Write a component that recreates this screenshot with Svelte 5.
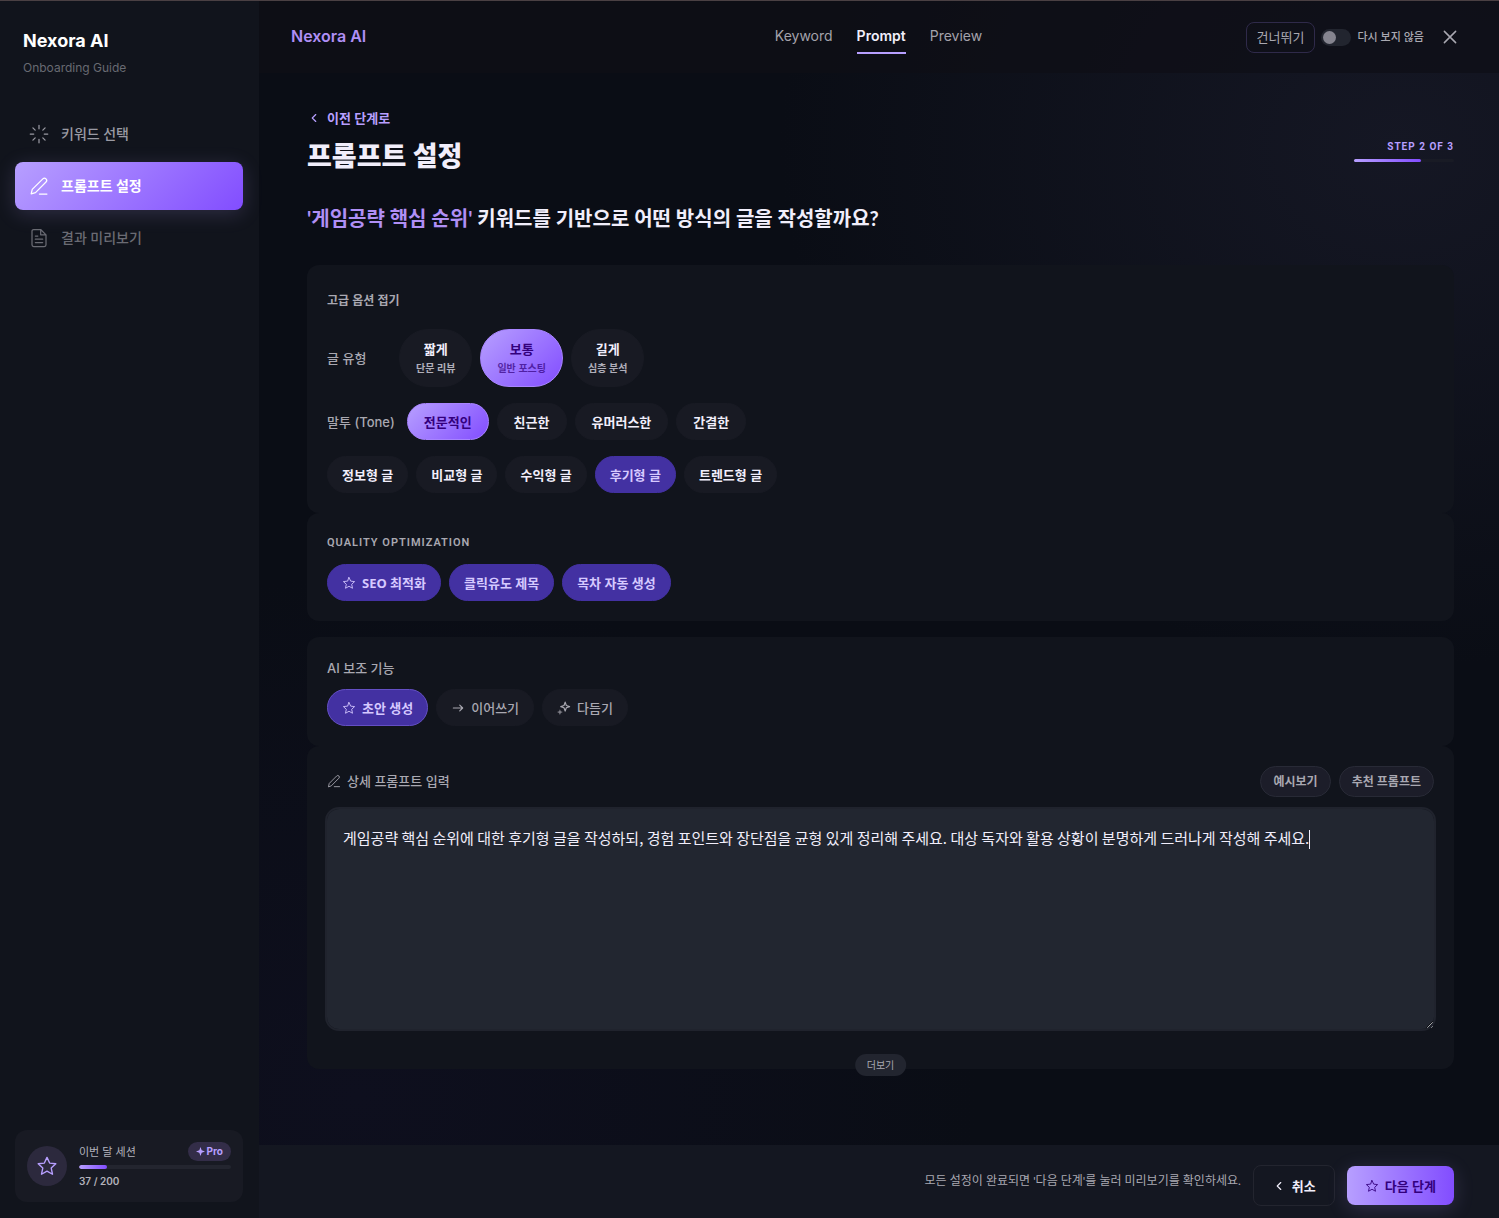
<script>
  let prompt = $state('게임공략 핵심 순위에 대한 후기형 글을 작성하되, 경험 포인트와 장단점을 균형 있게 정리해 주세요. 대상 독자와 활용 상황이 분명하게 드러나게 작성해 주세요.');
  let length = $state('보통');
  let tone = $state('전문적인');
  let kind = $state('후기형 글');
  let hideNext = $state(false);
  let field;

  const used = 37;
  const quota = 200;
  const step = 2;
  const steps = 3;

  const lengths = [
    { name: '짧게', note: '단문 리뷰' },
    { name: '보통', note: '일반 포스팅' },
    { name: '길게', note: '심층 분석' }
  ];
  const tones = ['전문적인', '친근한', '유머러스한', '간결한'];
  const kinds = ['정보형 글', '비교형 글', '수익형 글', '후기형 글', '트렌드형 글'];

  $effect(() => {
    field.focus();
    field.setSelectionRange(field.value.length, field.value.length);
  });
</script>

{#snippet star(size)}
  <svg class="icon" width={size} height={size} viewBox="0 0 24 24" aria-hidden="true">
    <path d="M12 2.6l2.9 6.2 6.7.8-5 4.6 1.4 6.8-6-3.4-6 3.4 1.4-6.8-5-4.6 6.7-.8z" />
  </svg>
{/snippet}

{#snippet pen(size)}
  <svg class="icon" width={size} height={size} viewBox="0 0 24 24" aria-hidden="true">
    <path d="M2.6 21.4l1.3-5.3L16.6 3.4a2.6 2.6 0 0 1 3.8 3.8L7.8 19.9zM12.5 21.7h9" />
  </svg>
{/snippet}

{#snippet chevron(size)}
  <svg class="icon bold" width={size} height={size} viewBox="0 0 24 24" aria-hidden="true">
    <path d="M15 6l-6 6 6 6" />
  </svg>
{/snippet}

<div class="app">
  <aside class="sidebar">
    <div class="brand">
      <strong>Nexora AI</strong>
      <span>Onboarding Guide</span>
    </div>
    <nav class="steps" aria-label="단계">
      <a class="step" href="#keyword">
        <svg class="icon" width="20" height="20" viewBox="0 0 24 24" aria-hidden="true">
          <path d="M12 1.5v4.2M12 18.3v4.2M1.5 12h4.2M18.3 12h4.2M4.7 4.7l2.7 2.7M16.6 16.6l2.7 2.7M4.7 19.3l2.7-2.7M16.6 7.4l2.7-2.7" />
        </svg>
        키워드 선택
      </a>
      <a class="step current" href="#prompt" aria-current="step">
        {@render pen(20)}
        프롬프트 설정
      </a>
      <a class="step upcoming" href="#preview">
        <svg class="icon" width="20" height="20" viewBox="0 0 24 24" aria-hidden="true">
          <path d="M14 1.8H5.6a2 2 0 0 0-2 2v16.4a2 2 0 0 0 2 2h12.8a2 2 0 0 0 2-2V8.2zM14 1.8v6.4h6.4M7.6 9.6h3M7.6 13.4h8.8M7.6 17.4h8.8" />
        </svg>
        결과 미리보기
      </a>
    </nav>
    <section class="usage">
      <div class="avatar">{@render star(22)}</div>
      <div class="meter">
        <div class="meter-head">
          <span>이번 달 세션</span>
          <span class="pro">
            <svg width="9" height="9" viewBox="0 0 10 10" aria-hidden="true"><path d="M5 0l1.3 3.7L10 5 6.3 6.3 5 10 3.7 6.3 0 5l3.7-1.3z" fill="currentColor" /></svg>
            Pro
          </span>
        </div>
        <div class="bar"><div class="fill" style:width="{(used / quota) * 100}%"></div></div>
        <span class="count">{used} / {quota}</span>
      </div>
    </section>
  </aside>

  <div class="main">
    <header class="topbar">
      <span class="logo">Nexora AI</span>
      <nav class="tabs" aria-label="화면">
        <a href="#keyword">Keyword</a>
        <a class="on" href="#prompt">Prompt</a>
        <a href="#preview">Preview</a>
      </nav>
      <div class="tools">
        <button class="skip" type="button">건너뛰기</button>
        <label class="toggle">
          <input type="checkbox" bind:checked={hideNext} />
          다시 보지 않음
        </label>
        <button class="close" type="button" aria-label="닫기">
          <svg class="icon bold" width="18" height="18" viewBox="0 0 24 24" aria-hidden="true">
            <path d="M4.5 4.5l15 15M19.5 4.5l-15 15" />
          </svg>
        </button>
      </div>
    </header>

    <main class="content">
      <div class="head">
        <div>
          <button class="back" type="button">{@render chevron(14)} 이전 단계로</button>
          <h1>프롬프트 설정</h1>
        </div>
        <div class="progress">
          <span>STEP {step} OF {steps}</span>
          <div class="track"><div class="fill" style:width="{(step / steps) * 100}%"></div></div>
        </div>
      </div>
      <h2><em>'게임공략 핵심 순위'</em> 키워드를 기반으로 어떤 방식의 글을 작성할까요?</h2>

      <section class="card options">
        <button class="fold" type="button">고급 옵션 접기</button>
        <div class="row">
          <span class="label">글 유형</span>
          <div class="chips">
            {#each lengths as l}
              <button class="chip wide tall" class:hot={length === l.name} type="button" onclick={() => (length = l.name)}>
                {l.name}<small>{l.note}</small>
              </button>
            {/each}
          </div>
        </div>
        <div class="row">
          <span class="label">말투 (Tone)</span>
          <div class="chips">
            {#each tones as t}
              <button class="chip wide" class:hot={tone === t} type="button" onclick={() => (tone = t)}>{t}</button>
            {/each}
          </div>
        </div>
        <div class="chips">
          {#each kinds as k}
            <button class="chip" class:on={kind === k} type="button" onclick={() => (kind = k)}>{k}</button>
          {/each}
        </div>
      </section>

      <section class="card">
        <h3 class="caps">QUALITY OPTIMIZATION</h3>
        <div class="chips">
          <button class="chip on" type="button">{@render star(14)} SEO 최적화</button>
          <button class="chip on" type="button">클릭유도 제목</button>
          <button class="chip on" type="button">목차 자동 생성</button>
        </div>
      </section>

      <section class="card apart">
        <h3>AI 보조 기능</h3>
        <div class="chips">
          <button class="chip on ring" type="button">{@render star(14)} 초안 생성</button>
          <button class="chip quiet" type="button">
            <svg class="icon bold" width="14" height="14" viewBox="0 0 24 24" aria-hidden="true"><path d="M4 12h16M15 7l5 5-5 5" /></svg>
            이어쓰기
          </button>
          <button class="chip quiet" type="button">
            <svg class="icon bold" width="14" height="14" viewBox="0 0 24 24" aria-hidden="true">
              <path d="M14 2l2 5.600 5.600 2-5.600 2-2 5.600-2-5.600-5.600-2 5.600-2z" />
              <path d="M5 14l1.500 3.500L10 19l-3.500 1.500L5 24l-1.500-3.500L0 19l3.500-1.500z" fill="currentColor" stroke="none" opacity="0.7" />
            </svg>
            다듬기
          </button>
        </div>
      </section>

      <section class="card editor">
        <div class="prompt-head">
          <label for="prompt">{@render pen(14)} 상세 프롬프트 입력</label>
          <div class="chips">
            <button class="mini" type="button">예시보기</button>
            <button class="mini" type="button">추천 프롬프트</button>
          </div>
        </div>
        <div class="field">
          <textarea id="prompt" bind:this={field} bind:value={prompt} spellcheck="false"></textarea>
          <div class="caret" aria-hidden="true">{prompt}</div>
        </div>
        <button class="more" type="button">더보기</button>
      </section>
    </main>

    <footer class="footer">
      <p>모든 설정이 완료되면 '다음 단계'를 눌러 미리보기를 확인하세요.</p>
      <button class="cancel" type="button">{@render chevron(14)} 취소</button>
      <button class="next" type="button">{@render star(14)} 다음 단계</button>
    </footer>
  </div>
</div>

<style>
  :global(body) {
    background: #0a0d15;
  }

  .app {
    display: grid;
    grid-template-columns: 259px minmax(0, 1fr);
    min-height: 100vh;
    box-sizing: border-box;
    border-top: 1px solid #4a4043;
    color: #f1eefb;
    font-family: Inter, 'Noto Sans CJK KR', sans-serif;
    font-size: 13px;
    line-height: 20px;
  }

  .app :global(*) {
    box-sizing: border-box;
  }

  button {
    font: inherit;
    font-family: 'Noto Sans', 'Noto Sans CJK KR', sans-serif;
    color: inherit;
    background: none;
    border: 0;
    padding: 0;
    cursor: pointer;
    white-space: nowrap;
  }

  a {
    color: inherit;
    text-decoration: none;
  }

  h1,
  h2,
  h3,
  p {
    margin: 0;
  }

  h1,
  h2,
  p,
  .step {
    font-family: Lato, 'Noto Sans CJK KR', sans-serif;
  }

  .icon {
    flex: none;
    fill: none;
    stroke: currentColor;
    stroke-width: 1.5;
    stroke-linecap: round;
    stroke-linejoin: round;
  }

  .icon.bold {
    stroke-width: 2;
  }

  .sidebar {
    display: flex;
    flex-direction: column;
    padding: 28px 16px 16px 15px;
    background: #11141c;
  }

  .brand {
    display: flex;
    flex-direction: column;
    gap: 5px;
    padding: 0 8px;
  }

  .brand strong {
    font-size: 18px;
    line-height: 24px;
    color: #ffffff;
  }

  .brand span {
    font-size: 12px;
    line-height: 20px;
    color: #686a72;
  }

  .steps {
    display: flex;
    flex-direction: column;
    gap: 4px;
    margin-top: 32px;
  }

  .step {
    display: flex;
    align-items: center;
    gap: 12px;
    height: 48px;
    padding: 0 14px;
    border-radius: 8px;
    font-size: 14px;
    font-weight: 500;
    color: #9a9aa3;
  }

  .step.current {
    color: #ffffff;
    font-weight: 700;
    background: linear-gradient(135deg, #b79fff, #824dff);
    box-shadow: 0 4px 20px #b79fff2e;
  }

  .step.upcoming {
    color: #6a6b73;
  }

  .usage {
    display: flex;
    align-items: center;
    gap: 12px;
    margin-top: auto;
    padding: 12px;
    border-radius: 12px;
    background: #181a23;
    font-size: 11px;
    line-height: 16px;
    color: #b3b2bb;
  }

  .avatar {
    display: grid;
    place-items: center;
    flex: none;
    width: 40px;
    height: 40px;
    border-radius: 50%;
    background: #2c293d;
    color: #b79fff;
  }

  .meter {
    flex: 1;
  }

  .meter-head {
    display: flex;
    align-items: center;
    justify-content: space-between;
    margin-bottom: 4px;
  }

  .pro {
    display: flex;
    align-items: center;
    gap: 2px;
    padding: 2px 8px;
    border-radius: 10px;
    background: #332d48;
    color: #b79fff;
    font-size: 10px;
    font-weight: 700;
    line-height: 15px;
  }

  .bar {
    height: 4px;
    border-radius: 2px;
    background: #23252f;
    overflow: hidden;
  }

  .fill {
    height: 100%;
    border-radius: 2px;
    background: linear-gradient(90deg, #b79fff, #824dff);
  }

  .count {
    display: block;
    margin-top: 4px;
    font-size: 10px;
    font-weight: 600;
    line-height: 17px;
  }

  .main {
    display: flex;
    flex-direction: column;
    background:
      radial-gradient(ellipse 620px 520px at 92% 12%, #151724, #15172400),
      radial-gradient(ellipse 620px 520px at 8% 90%, #0e0f1e, #0e0f1e00);
  }

  .topbar {
    display: grid;
    grid-template-columns: 1fr auto 1fr;
    align-items: center;
    height: 72px;
    padding: 0 33px 0 32px;
    background: #0e0e16b0;
  }

  .logo {
    padding-bottom: 2px;
    font-size: 16px;
    font-weight: 600;
    color: #b08ff5;
  }

  .tabs {
    display: flex;
    gap: 24px;
    padding-bottom: 2px;
    font-size: 14px;
    color: #a3a2ab;
  }

  .tabs a {
    padding: 8px 0 6px;
    border-bottom: 2px solid transparent;
  }

  .tabs .on {
    color: #f1eefb;
    font-weight: 600;
    border-color: #b79fff;
  }

  .tools {
    display: flex;
    align-items: center;
    justify-content: flex-end;
    gap: 6px;
    color: #a9a8b1;
  }

  .skip {
    height: 31px;
    padding: 0 10px;
    border: 1px solid #2f2a4a;
    border-radius: 8px;
  }

  .toggle {
    display: flex;
    align-items: center;
    gap: 6px;
    font-size: 11px;
    font-weight: 500;
    white-space: nowrap;
  }

  .toggle input {
    appearance: none;
    display: grid;
    align-items: center;
    width: 30px;
    height: 17px;
    margin: 0;
    padding: 0 2px;
    border-radius: 9px;
    background: #22252f;
  }

  .toggle input::before {
    content: '';
    width: 13px;
    height: 13px;
    border-radius: 50%;
    background: #85848f;
  }

  .toggle input:checked::before {
    justify-self: end;
  }

  .close {
    display: grid;
    place-items: center;
    width: 32px;
    height: 32px;
    margin-left: 4px;
  }

  .content {
    flex: 1;
    padding: 32px 45px 76px 48px;
  }

  .head {
    display: flex;
    align-items: center;
    justify-content: space-between;
  }

  .back {
    display: flex;
    align-items: center;
    gap: 6px;
    color: #b79fff;
    font-weight: 700;
    line-height: 26px;
  }

  h1 {
    margin-top: 5px;
    font-size: 27px;
    font-weight: 900;
    line-height: 40px;
  }

  .progress {
    display: flex;
    flex-direction: column;
    align-items: flex-end;
    gap: 4px;
    margin-top: 20px;
    font-family: Roboto, sans-serif;
    font-size: 10px;
    font-weight: 700;
    letter-spacing: 1px;
    line-height: 16px;
    color: #b79fff;
  }

  .track {
    width: 100px;
    height: 3px;
    border-radius: 2px;
    background: #191b25;
  }

  h2 {
    margin: 26px 0 31px;
    font-size: 20px;
    font-weight: 700;
    line-height: 32px;
  }

  h2 em {
    font-style: normal;
    color: #b08ff5;
  }

  .card {
    position: relative;
    padding: 20px;
    border-radius: 12px;
    background: #11141c;
  }

  .card.apart {
    margin-top: 16px;
  }

  .options {
    display: flex;
    flex-direction: column;
    gap: 16px;
  }

  .fold {
    align-self: flex-start;
    height: 28px;
    padding-top: 3px;
    font-size: 12px;
    font-weight: 700;
    color: #a9a8b1;
  }

  .row {
    display: flex;
    align-items: center;
    gap: 12px;
  }

  .label {
    min-width: 60px;
    font-weight: 500;
    color: #a9a8b1;
  }

  .chips {
    display: flex;
    flex-wrap: wrap;
    gap: 8px;
  }

  .chip {
    display: flex;
    align-items: center;
    justify-content: center;
    gap: 6px;
    min-height: 37px;
    padding: 0 14px;
    border: 1px solid #181a23;
    border-radius: 29px;
    background: #181a23;
    font-weight: 700;
  }

  .chip.wide {
    padding: 0 16px;
  }

  .chip.tall {
    flex-direction: column;
    gap: 0;
    min-height: 58px;
  }

  .chip small {
    font-size: 10px;
    line-height: 18px;
    opacity: 0.7;
  }

  .chip.hot {
    border-color: #a884ff;
    background: linear-gradient(135deg, #b79fff, #824dff);
    color: #33007d;
  }

  .chip.on {
    border-color: #4331a2;
    background: #4331a2;
    color: #d6c9ff;
  }

  .chip.ring {
    border-color: #644fc4;
  }

  .chip.quiet {
    font-weight: 500;
    color: #a9a8b1;
  }

  h3 {
    margin-bottom: 10px;
    font-size: 13px;
    font-weight: 500;
    line-height: 22px;
    color: #a9a8b1;
  }

  h3.caps {
    margin-bottom: 11px;
    font-family: Roboto, sans-serif;
    font-size: 11px;
    font-weight: 600;
    letter-spacing: 1px;
    line-height: 20px;
  }

  .prompt-head {
    display: flex;
    align-items: center;
    justify-content: space-between;
    margin-bottom: 12px;
  }

  .prompt-head label {
    display: flex;
    align-items: center;
    gap: 6px;
    padding-bottom: 2px;
    font-weight: 500;
    color: #a9a8b1;
  }

  .mini {
    height: 31px;
    padding: 0 12px;
    border: 1px solid #282a36;
    border-radius: 16px;
    background: #1c1d29;
    font-size: 12px;
    font-weight: 700;
    color: #a9a8b1;
  }

  .field {
    display: grid;
  }

  textarea,
  .caret {
    grid-area: 1 / 1;
    width: 100%;
    padding: 16px;
    font-family: 'Noto Sans CJK KR', sans-serif;
    font-size: 15px;
    line-height: 26px;
    white-space: pre-wrap;
  }

  textarea {
    display: block;
    height: 220px;
    border: 0;
    border-radius: 12px;
    outline: 2px solid #20232d;
    background: #222630;
    color: #f1eefb;
    caret-color: transparent;
    resize: vertical;
  }

  .caret {
    visibility: hidden;
    pointer-events: none;
  }

  textarea:focus + .caret::after {
    content: '';
    visibility: visible;
    display: inline-block;
    width: 1px;
    height: 19px;
    vertical-align: middle;
    background: #f1eefb;
  }

  .editor {
    padding-bottom: 40px;
  }

  .more {
    position: absolute;
    left: 50%;
    bottom: -7px;
    transform: translateX(-50%);
    height: 22px;
    padding: 0 12px;
    border-radius: 11px;
    background: #22252f;
    font-size: 10px;
    color: #a9a8b1;
  }

  .footer {
    display: flex;
    align-items: center;
    justify-content: flex-end;
    gap: 12px;
    min-height: 73px;
    padding: 8px 45px 0;
    background: #141721;
  }

  .footer p {
    padding-bottom: 10px;
    font-size: 12px;
    color: #a9a8b1;
  }

  .cancel,
  .next {
    display: flex;
    align-items: center;
    justify-content: center;
    gap: 6px;
    height: 41px;
    padding: 0 18px;
    border: 1px solid #23252f;
    border-radius: 8px;
    font-weight: 700;
  }

  .next {
    height: 39px;
    border: 0;
    background: linear-gradient(90deg, #b79fff, #824dff);
    box-shadow: 0 4px 20px #b79fff2e;
    color: #33007d;
  }
</style>
